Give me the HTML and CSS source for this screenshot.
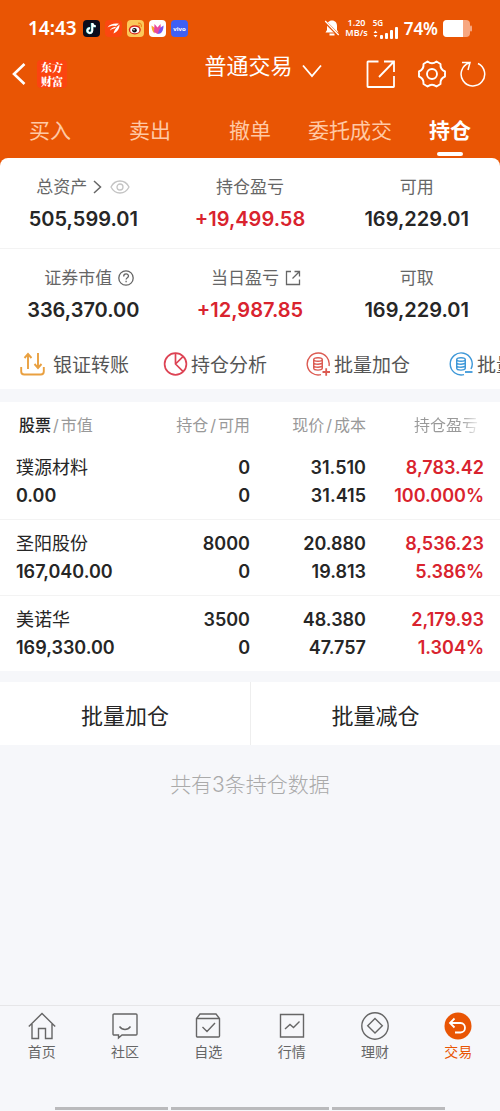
FILE: index.html
```html
<!DOCTYPE html>
<html lang="zh-CN">
  <head>
    <meta charset="utf-8">
    <meta name="viewport" content="width=device-width, initial-scale=1.0">
    <title>普通交易</title>
    <link rel="stylesheet" href="styles.css">
  </head>
  <body>
    <header class="header">
      <div class="status">
        <span class="time">14:43</span>
        <div class="apps">
          <svg width="17" height="17" viewBox="0 0 17 17"><rect width="17" height="17" rx="4" fill="#0b0d1c"/><path d="M9 3v7.600a2.400 2.400 0 1 1-2.200-2.400M9 3.200c.3 2 1.600 3 3.500 3.200" fill="none" stroke="#3fe3e0" stroke-width="2.400"/><path d="M9.300 3v7.600a2.400 2.400 0 1 1-2.200-2.400M9.300 3.200c.3 2 1.600 3 3.500 3.200" fill="none" stroke="#fff" stroke-width="1.900"/></svg>
          <svg width="17" height="17" viewBox="0 0 17 17"><rect width="17" height="17" rx="4" fill="#fb4710"/><path d="M2.500 7.500C5 4 9 3.200 14 3.800L11 6C8 5.500 5 6 2.500 7.500zM4.500 11c1.500-3 4-4.300 7-4.300L9.500 8.500C7.500 8.500 6 9.500 4.500 11zM8.500 13.500c.5-3 2.500-6 6-9 0 4-2 7.500-6 9z" fill="#fff"/></svg>
          <svg width="17" height="17" viewBox="0 0 17 17"><rect width="17" height="17" rx="4" fill="#fbc95a"/><ellipse cx="7.800" cy="9.800" rx="6" ry="4.600" fill="#d8271c"/><ellipse cx="7.800" cy="10" rx="4.600" ry="3.300" fill="#fff"/><circle cx="7.500" cy="10.200" r="2.300" fill="#111"/><circle cx="7" cy="9.700" r=".8" fill="#fff"/><path d="M11 3.200c2.500-.4 4 1.500 3.400 3.800M11.300 5.200c1-.1 1.600.6 1.300 1.500" fill="none" stroke="#f08a1c" stroke-width="1.100"/></svg>
          <svg width="17" height="17" viewBox="0 0 17 17"><rect width="17" height="17" rx="4" fill="#fff"/><path d="M2.500 5.500L6 8l-.5 5.500C3.500 12 2.500 9 2.500 5.500z" fill="#f7a531"/><path d="M5.500 4l3 3.500L11.500 4l.5 6-3.500 4L5 12z" fill="#e8489e"/><path d="M14.500 5.500L11 8l-2.500 6c4 0 6-3.500 6-8.500z" fill="#7a55ee"/></svg>
          <svg width="17" height="17" viewBox="0 0 17 17"><rect width="17" height="17" rx="4" fill="#3f60f4"/><text x="8.500" y="10.500" text-anchor="middle" class="vivo">vivo</text></svg>
        </div>
        <div class="signals">
          <svg width="16" height="18" viewBox="0 0 16 18"><path d="M8 1.500c3.200 0 5 2.300 5 5.300V11l1.500 2.500h-13L3 11V6.800c0-3 1.800-5.300 5-5.300z" fill="#fff"/><path d="M5.500 15.500h5" stroke="#fff" stroke-width="2"/><path d="M.8 2.500l14 14" stroke="#e95504" stroke-width="3"/><path d="M1.200 2l13.500 14" stroke="#fff" stroke-width="1.300"/></svg>
          <div class="speed"><span>1.20</span><span>MB/s</span></div>
          <div class="network">
            <span>5G</span>
            <svg width="26" height="12" viewBox="0 0 26 12" fill="#fff"><path d="M.5 6L2.500 3.500l2 2.500zM.5 8L2.500 10.500l2-2.500z"/><rect x="7" y="8" width="3" height="4" rx="1"/><rect x="12" y="6" width="3" height="6" rx="1"/><rect x="17" y="3" width="3" height="9" rx="1"/><rect x="22" y="0" width="3" height="12" rx="1"/></svg>
          </div>
          <span class="percent">74%</span>
          <svg width="29" height="17" viewBox="0 0 29 17"><rect width="27" height="17" rx="4" fill="#f7a780"/><rect x="27" y="5.500" width="2" height="6" rx="1" fill="#f7a780"/><path d="M4 0h16v17H4a4 4 0 0 1-4-4V4a4 4 0 0 1 4-4z" fill="#fff"/></svg>
        </div>
      </div>

      <div class="titlebar">
        <div class="side">
          <button class="icon-button" aria-label="返回"><svg width="14" height="24" viewBox="0 0 14 24"><path d="M12.500 2L2 12l10.500 10" fill="none" stroke="#fff" stroke-width="2.600"/></svg></button>
          <div class="logo">东方<br>财富</div>
        </div>
        <div class="account">
          <select class="account-select" aria-label="交易类型">
            <option>普通交易</option>
          </select>
          <svg width="20" height="14" viewBox="0 0 20 14"><path d="M1 1.500l9 10.500 9-10.500" fill="none" stroke="#fff" stroke-width="1.800"/></svg>
        </div>
        <div class="side tools">
          <button class="icon-button share" aria-label="分享"><svg width="30" height="30" viewBox="0 0 30 30" fill="none" stroke="#fff" stroke-width="1.800"><path d="M12.500 2.500H2a.5.500 0 0 0-.5.500v24.500a.5.500 0 0 0 .5.500h25.500a.5.500 0 0 0 .5-.5V17M18 2.500h10V13M28 2.500L13 18"/></svg></button>
          <button class="icon-button" aria-label="设置"><svg width="28" height="28" viewBox="0 0 28 28" fill="none" stroke="#fff" stroke-width="1.900" stroke-linejoin="round"><path d="M9.500 1.500Q14 5 18.500 1.500L22.500 4Q22 9.500 27 11.500V16.500Q22 18.500 22.500 24L18.500 26.500Q14 23 9.500 26.500L5.500 24Q6 18.500 1 16.500V11.500Q6 9.500 5.500 4Z"/><circle cx="14" cy="14" r="5"/></svg></button>
          <button class="icon-button" aria-label="刷新"><svg width="26" height="28" viewBox="0 0 26 28" fill="none" stroke="#fff" stroke-width="1.500"><path d="M18 3.500A11.800 11.800 0 1 1 9 3M2 2.500h8L8 10"/></svg></button>
        </div>
      </div>

      <nav class="tabs">
        <a href="#" class="tab">买入</a>
        <a href="#" class="tab">卖出</a>
        <a href="#" class="tab">撤单</a>
        <a href="#" class="tab">委托成交</a>
        <a href="#" class="tab active">持仓</a>
      </nav>
    </header>

    <main class="main">
      <section class="summary">
        <div class="assets">
          <div class="asset">
            <div class="label">总资产 <svg width="9" height="14" viewBox="0 0 9 14"><path d="M1 1l6.500 6L1 13" fill="none" stroke="#666" stroke-width="1.500"/></svg><svg class="eye" width="20" height="14" viewBox="0 0 20 14" fill="none" stroke="#c4c4c4" stroke-width="1.300"><path d="M1 7C5-1 15-1 19 7 15 15 5 15 1 7z"/><circle cx="10" cy="7" r="3"/></svg></div>
            <div class="value">505,599.01</div>
          </div>
          <div class="asset">
            <div class="label">持仓盈亏</div>
            <div class="value red">+19,499.58</div>
          </div>
          <div class="asset">
            <div class="label">可用</div>
            <div class="value">169,229.01</div>
          </div>
        </div>
        <div class="assets">
          <div class="asset">
            <div class="label hint">证券市值 <svg width="16" height="16" viewBox="0 0 16 16" fill="none" stroke="#666" stroke-width="1.300"><circle cx="8" cy="8" r="7.200"/><path d="M5.700 6.500c0-3.300 4.800-3.300 4.800-.4 0 1.700-2.400 1.700-2.400 3.500M8.100 10.800v1.500"/></svg></div>
            <div class="value">336,370.00</div>
          </div>
          <div class="asset">
            <div class="label hint">当日盈亏 <svg width="16" height="16" viewBox="0 0 16 16" fill="none" stroke="#666" stroke-width="1.300"><path d="M6 1.500H1.500v13h13V9.500M9.500 1.500h5v5M14.500 1.500L7.500 8.500"/></svg></div>
            <div class="value red">+12,987.85</div>
          </div>
          <div class="asset">
            <div class="label">可取</div>
            <div class="value">169,229.01</div>
          </div>
        </div>
        <div class="actions">
          <button class="action"><svg width="25" height="24" viewBox="0 0 25 24" fill="none" stroke="#e9a040" stroke-width="1.900"><path d="M1.200 15v4.500c0 2 1.200 3 3 3h16.600c1.800 0 3-1 3-3V15M8 17V2M4.500 6L8 2l3.500 4M18 1v15M14.500 12l3.500 4 3.500-4"/></svg><span class="wide">银证转账</span></button>
          <button class="action"><svg width="25" height="24" viewBox="0 0 25 24" fill="none" stroke="#dd4354" stroke-width="1.700"><circle cx="12.500" cy="12" r="10.900"/><path d="M12.500 1v11l7.700 7.700M12.500 12l7.700-7.700"/></svg><span>持仓分析</span></button>
          <button class="action"><svg width="25" height="24" viewBox="0 0 25 24" fill="none" stroke="#dc5b52" stroke-width="1.400"><path d="M15 22.600A11 11 0 1 1 23 14"/><ellipse cx="12" cy="7.500" rx="4.300" ry="1.800"/><path d="M7.700 7.500v8.800c0 2.400 8.600 2.400 8.600 0V7.500M7.700 10.400c0 2.400 8.600 2.400 8.600 0M7.700 13.400c0 2.400 8.600 2.400 8.600 0"/><path d="M16.500 20h7.500M20.200 16.200v7.500" stroke-width="1.800"/></svg><span>批量加仓</span></button>
          <button class="action"><svg width="25" height="24" viewBox="0 0 25 24" fill="none" stroke="#3e98d8" stroke-width="1.400"><path d="M15 22.600A11 11 0 1 1 22 17"/><ellipse cx="12" cy="7.500" rx="4.300" ry="1.800"/><path d="M7.700 7.500v8.800c0 2.400 8.600 2.400 8.600 0V7.500M7.700 10.400c0 2.400 8.600 2.400 8.600 0M7.700 13.400c0 2.400 8.600 2.400 8.600 0"/><path d="M16 20h7.500" stroke-width="1.800"/></svg><span>批量减仓</span></button>
        </div>
      </section>

      <table class="holdings">
        <thead>
          <tr>
            <th class="stock"><b>股票</b><i>/</i>市值</th>
            <th>持仓<i>/</i>可用</th>
            <th class="price">现价<i>/</i>成本</th>
            <th class="profit"><span>持仓盈亏</span></th>
          </tr>
        </thead>
        <tbody>
          <tr>
            <td><span class="name">璞源材料</span><br>0.00</td>
            <td>0<br>0</td>
            <td class="price">31.510<br>31.415</td>
            <td class="red">8,783.42<br>100.000%</td>
          </tr>
          <tr>
            <td><span class="name">圣阳股份</span><br>167,040.00</td>
            <td>8000<br>0</td>
            <td class="price">20.880<br>19.813</td>
            <td class="red">8,536.23<br>5.386%</td>
          </tr>
          <tr>
            <td><span class="name">美诺华</span><br>169,330.00</td>
            <td>3500<br>0</td>
            <td class="price">48.380<br>47.757</td>
            <td class="red">2,179.93<br>1.304%</td>
          </tr>
        </tbody>
      </table>

      <div class="batch">
        <button class="batch-button">批量加仓</button>
        <button class="batch-button">批量减仓</button>
      </div>
      <p class="count">共有3条持仓数据</p>
    </main>

    <footer class="footer">
      <nav class="bottom-nav">
        <a href="#" class="nav-item"><svg width="28" height="28" viewBox="0 0 28 28"><path d="M.8 14.500L14 1.500l13.200 13M4 12v14.500h6.500v-10h7v10H24V12"/></svg>首页</a>
        <a href="#" class="nav-item"><svg width="28" height="28" viewBox="0 0 28 28"><path d="M3 2h22a1 1 0 0 1 1 1v19a1 1 0 0 1-1 1H11l-3.500 3V23H3a1 1 0 0 1-1-1V3a1 1 0 0 1 1-1zM8.500 14.500c3 4 8 4 11 0"/></svg>社区</a>
        <a href="#" class="nav-item"><svg width="28" height="28" viewBox="0 0 28 28"><path d="M2.500 6.500L6 2h16l3.500 4.500V24a1 1 0 0 1-1 1h-21a1 1 0 0 1-1-1zM2.500 6.500h23M8.500 15l4.500 4.500 8-8.500"/></svg>自选</a>
        <a href="#" class="nav-item"><svg width="28" height="28" viewBox="0 0 28 28"><path d="M2.500 2.500h23v22.500h-23zM7 17l5-4.500 3.500 3L21.500 9.500"/></svg>行情</a>
        <a href="#" class="nav-item"><svg width="28" height="28" viewBox="0 0 28 28"><circle cx="14" cy="14" r="13.200"/><path d="M14 6.500l7.300 7.300L14 21l-7.300-7.200z"/></svg>理财</a>
        <a href="#" class="nav-item current"><svg width="28" height="28" viewBox="0 0 28 28"><circle cx="14" cy="14" r="13.500" class="disc"/><path d="M10.500 6.500L6 11l4.500 4.500M6 11h10.500c6 0 6 9.500 0 9.500H11" class="arrow"/></svg>交易</a>
      </nav>
      <div class="gestures"><span></span><span class="home"></span><span></span></div>
    </footer>
  </body>
</html>
```
FILE: styles.css
```css
* {
  box-sizing: border-box;
}
body {
  margin: 0;
  min-height: 100vh;
  display: flex;
  flex-direction: column;
  background-color: #f6f7fa;
  color: #262626;
  font-family: Inter, "Noto Sans CJK SC", sans-serif;
  overflow-x: hidden;
}
svg {
  display: block;
  flex: none;
}
button {
  border: none;
  padding: 0;
  background: none;
  color: inherit;
  font-family: inherit;
}
a {
  color: inherit;
  text-decoration: none;
}
.red {
  color: #d9232e;
}

/* header */
.header {
  background-color: #e95504;
  color: #fff;
  padding-bottom: 8px;
  margin-bottom: -8px;
}
.status {
  display: flex;
  align-items: center;
  height: 56px;
  padding: 0 28px;
  font-family: "Noto Sans", sans-serif;
  font-weight: 600;
}
.time {
  font-size: 19px;
}
.apps {
  display: flex;
  gap: 5px;
  margin-left: 6px;
}
.vivo {
  font: bold 6px "Noto Sans", sans-serif;
  fill: #fff;
}
.signals {
  display: flex;
  align-items: center;
  gap: 5px;
  margin-left: auto;
}
.speed {
  display: flex;
  flex-direction: column;
  align-items: center;
  font-size: 9px;
  line-height: 10px;
}
.network {
  font-size: 8px;
  line-height: 9px;
}
.network span {
  display: block;
}
.percent {
  font-size: 17px;
}
.titlebar {
  display: flex;
  align-items: center;
  height: 36px;
  padding: 0 14px 0 12px;
}
.side {
  flex: 1;
  display: flex;
  align-items: center;
  gap: 11px;
}
.tools {
  justify-content: flex-end;
  gap: 14px;
}
.share {
  margin-right: 8px;
}
.logo {
  padding: 0 4px;
  border-radius: 4px;
  background-color: #fb4410;
  font: 900 11px/14px "Noto Serif CJK SC", "Noto Sans CJK SC", sans-serif;
}
.account {
  display: flex;
  align-items: center;
  gap: 8px;
  padding-left: 28px;
  padding-bottom: 20px;
}
.account svg {
  margin-top: 14px;
}
.account-select {
  appearance: none;
  border: none;
  padding: 0;
  background: none;
  color: #fff;
  font: 22px/32px "Noto Sans CJK SC", sans-serif;
}
.tabs {
  display: grid;
  grid-template-columns: repeat(5, 1fr);
  padding-top: 22px;
}
.tab {
  display: flex;
  flex-direction: column;
  align-items: center;
  height: 44px;
  font-size: 21px;
  line-height: 34px;
  color: #ffc9a5;
}
.active {
  color: #fff;
  font-weight: bold;
}
.active::after {
  content: "";
  width: 26px;
  height: 4px;
  margin-top: 4px;
  border-radius: 2px;
  background-color: #fff;
}

/* assets */
.main {
  flex: 1;
}
.summary {
  background-color: #fff;
  border-radius: 8px 8px 0 0;
}
.assets {
  display: grid;
  grid-template-columns: repeat(3, 1fr);
  height: 90px;
  padding-top: 16px;
  text-align: center;
}
.assets + .assets {
  border-top: 1px solid #f3f3f3;
}
.label {
  display: flex;
  align-items: center;
  justify-content: center;
  gap: 6px;
  font-size: 17px;
  line-height: 26px;
  color: #666;
}
.hint {
  padding-left: 12px;
}
.eye {
  margin-left: 2px;
}
.value {
  margin-top: 5px;
  font-size: 20px;
  font-weight: 600;
  line-height: 28px;
}
.actions {
  display: flex;
  height: 51px;
  overflow: hidden;
}
.action {
  flex: none;
  display: flex;
  align-items: center;
  gap: 3px;
  width: 143px;
  padding-left: 20px;
  font-size: 19px;
  color: #555;
  white-space: nowrap;
}
.wide {
  margin-left: 5px;
}

/* holdings */
.holdings {
  width: 100%;
  margin-top: 13px;
  border-collapse: collapse;
  table-layout: fixed;
  background-color: #fff;
}
.holdings th {
  height: 41px;
  padding: 2px 0 0;
  text-align: right;
  font-size: 16px;
  font-weight: normal;
  color: #999;
  white-space: nowrap;
}
.holdings i {
  margin: 0 2px;
  font-style: normal;
}
.holdings b {
  font-weight: 500;
  color: #262626;
}
.holdings .stock {
  width: 28%;
  padding-left: 19px;
  text-align: left;
}
.holdings .price {
  width: 24%;
  padding-right: 4px;
}
.holdings .profit {
  width: 26%;
  padding-right: 22px;
}
.profit span {
  background-image: linear-gradient(to right, #999 72%, #eee);
  background-clip: text;
  -webkit-background-clip: text;
  color: transparent;
}
.holdings td {
  height: 76px;
  padding: 2px 0 0;
  text-align: right;
  font-size: 18px;
  font-weight: 600;
  line-height: 28px;
}
.holdings td:first-child {
  padding-left: 16px;
  text-align: left;
}
.holdings td:last-child {
  padding-right: 16px;
}
.name {
  font-weight: normal;
}
.holdings tr + tr td {
  border-top: 1px solid #f3f3f3;
}

/* batch buttons */
.batch {
  display: grid;
  grid-template-columns: 1fr 1fr;
  margin-top: 11px;
  background-color: #fff;
}
.batch-button {
  height: 63px;
  font-size: 22px;
}
.batch-button + .batch-button {
  border-left: 1px solid #eee;
}
.count {
  margin: 25px 0;
  text-align: center;
  font-size: 21px;
  font-weight: 300;
  line-height: 30px;
  color: #aaa;
}

/* bottom navigation */
.footer {
  border-top: 1px solid #e6e6e8;
}
.bottom-nav {
  display: grid;
  grid-template-columns: repeat(6, 1fr);
  padding-top: 6px;
}
.nav-item {
  display: flex;
  flex-direction: column;
  align-items: center;
  gap: 2px;
  font-size: 14px;
  line-height: 20px;
  color: #666;
}
.nav-item svg {
  fill: none;
  stroke: #666;
  stroke-width: 1.4;
}
.nav-item.current {
  color: #e95504;
}
.nav-item .disc {
  fill: #e95504;
  stroke: none;
}
.nav-item .arrow {
  stroke: #fff;
  stroke-width: 1.8;
}
.gestures {
  display: flex;
  gap: 3px;
  margin-top: 45px;
  padding: 0 11%;
}
.gestures span {
  flex: 5;
  height: 3px;
  margin-bottom: 1px;
  background-color: #bababc;
}
.gestures .home {
  flex: 7;
}
```
